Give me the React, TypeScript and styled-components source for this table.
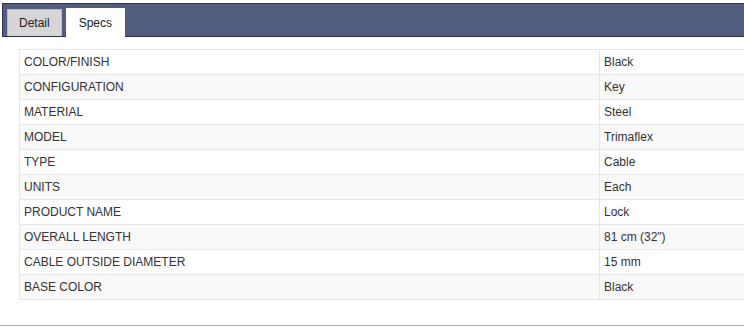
import React, { useState } from 'react';
import styled, { createGlobalStyle } from 'styled-components';

const GlobalStyle = createGlobalStyle`
  html, body {
    margin: 0;
    padding: 0;
    background: #ffffff;
  }
  body {
    font-family: "Liberation Sans", Arial, sans-serif;
    font-size: 12px;
    color: #333333;
  }
`;

const Page = styled.div`
  width: 744px;
  height: 330px;
  overflow: hidden;
  padding-top: 3px;
  box-sizing: border-box;
`;

const Panel = styled.div`
  border-bottom: 1px solid #a9a9a9;
  padding-bottom: 25px;
  overflow: hidden;
`;

const TabBar = styled.div`
  display: flex;
  align-items: flex-end;
  gap: 4px;
  height: 32px;
  margin-left: 2px;
  padding-left: 4px;
  background: #525c7f;
  border: 1px solid #2e344a;
  border-right: none;
`;

const Tab = styled.button<{ active: boolean }>`
  font-family: inherit;
  font-size: 12px;
  color: #222222;
  height: ${(p) => (p.active ? '29px' : '27px')};
  margin-bottom: ${(p) => (p.active ? '-1px' : '0')};
  padding: 0 ${(p) => (p.active ? '12px' : '11px')};
  background: ${(p) => (p.active ? '#ffffff' : '#d6d6d6')};
  border: 1px solid ${(p) => (p.active ? '#ffffff' : '#bdbdbd')};
  border-bottom: none;
  cursor: pointer;
  outline: none;
`;

const SpecsTable = styled.table`
  margin: 12px 0 0 19px;
  width: 760px;
  border-collapse: collapse;
  table-layout: fixed;
`;

const Row = styled.tr<{ striped: boolean }>`
  background: ${(p) => (p.striped ? '#f9f9f9' : '#ffffff')};
`;

const Cell = styled.td`
  height: 24px;
  padding: 0 4px;
  border: 1px solid #e6e6e6;
  color: #333333;
  white-space: nowrap;
`;

const specs: [string, string][] = [
  ['COLOR/FINISH', 'Black'],
  ['CONFIGURATION', 'Key'],
  ['MATERIAL', 'Steel'],
  ['MODEL', 'Trimaflex'],
  ['TYPE', 'Cable'],
  ['UNITS', 'Each'],
  ['PRODUCT NAME', 'Lock'],
  ['OVERALL LENGTH', '81 cm (32")'],
  ['CABLE OUTSIDE DIAMETER', '15 mm'],
  ['BASE COLOR', 'Black']
];

const App = () => {
  const [tab, setTab] = useState<string>('Specs');

  return (
    <Page>
      <GlobalStyle />
      <Panel>
        <TabBar>
          {['Detail', 'Specs'].map((name) => (
            <Tab key={name} active={tab === name} onClick={() => setTab(name)}>
              {name}
            </Tab>
          ))}
        </TabBar>
        <SpecsTable>
          <colgroup>
            <col style={{ width: '580px' }} />
            <col />
          </colgroup>
          <tbody>
            {specs.map(([label, value], idx) => (
              <Row key={label} striped={idx % 2 === 1}>
                <Cell>{label}</Cell>
                <Cell>{value}</Cell>
              </Row>
            ))}
          </tbody>
        </SpecsTable>
      </Panel>
    </Page>
  );
};

export default App;
